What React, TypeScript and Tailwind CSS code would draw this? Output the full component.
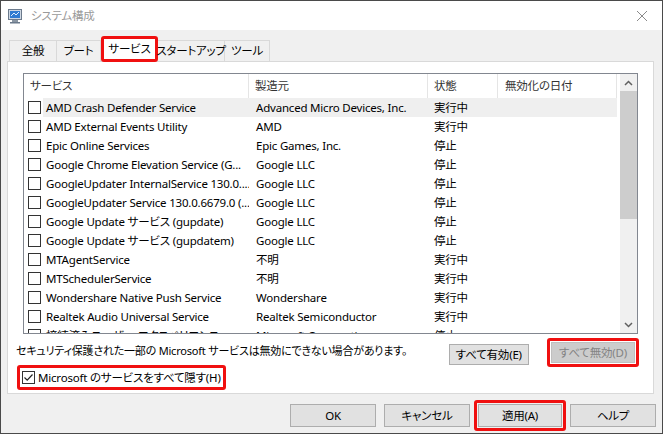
import React from "react";

const rows: [string, string, string][] = [
  ["AMD Crash Defender Service", "Advanced Micro Devices, Inc.", "実行中"],
  ["AMD External Events Utility", "AMD", "実行中"],
  ["Epic Online Services", "Epic Games, Inc.", "停止"],
  ["Google Chrome Elevation Service (G...", "Google LLC", "停止"],
  ["GoogleUpdater InternalService 130.0....", "Google LLC", "停止"],
  ["GoogleUpdater Service 130.0.6679.0 (...", "Google LLC", "停止"],
  ["Google Update サービス (gupdate)", "Google LLC", "停止"],
  ["Google Update サービス (gupdatem)", "Google LLC", "停止"],
  ["MTAgentService", "不明", "実行中"],
  ["MTSchedulerService", "不明", "実行中"],
  ["Wondershare Native Push Service", "Wondershare", "実行中"],
  ["Realtek Audio Universal Service", "Realtek Semiconductor", "実行中"],
  ["接続済みユーザー エクスペリエンス", "Microsoft Corporation", "停止"],
];

function Box({ checked = false }: { checked?: boolean }) {
  return (
    <div className="w-[13px] h-[13px] border border-[#333333] bg-white flex items-center justify-center shrink-0">
      {checked && (
        <svg width="11" height="11" viewBox="0 0 11 11">
          <path d="M1.5 5.5 L4.2 8.2 L9.5 2.5" fill="none" stroke="#222" strokeWidth="1.2" />
        </svg>
      )}
    </div>
  );
}

export default function App() {
  return (
    <div className="w-[663px] h-[434px] border border-[#4a4a4a] bg-[#f0f0f0] flex flex-col overflow-hidden text-[11.5px] tracking-[-0.2px] text-black font-['Noto_Sans','Noto_Sans_CJK_JP',sans-serif] [font-feature-settings:'palt']">
      {/* Title bar */}
      <div className="h-[29px] bg-white flex items-center pl-[6px] pr-[14px] shrink-0">
        <svg width="16" height="16" viewBox="0 0 16 16" className="shrink-0">
          <rect x="1.5" y="1.5" width="13" height="10" fill="#cfd8e3" stroke="#6b7a8c" />
          <rect x="3" y="3" width="10" height="7" fill="#2f7bd1" />
          <path d="M4 8 L7 5 L9 7 L12 4" stroke="#dfefff" strokeWidth="1" fill="none" />
          <rect x="5" y="12" width="6" height="2" fill="#8a96a3" />
          <rect x="3" y="14" width="10" height="1.5" fill="#6b7a8c" />
        </svg>
        <span className="ml-[8px] text-[11.5px] text-[#9a9a9a] leading-none">システム構成</span>
        <div className="flex-1" />
        <svg width="12" height="12" viewBox="0 0 12 12">
          <path d="M1 1 L11 11 M11 1 L1 11" stroke="#8a8a8a" strokeWidth="1" />
        </svg>
      </div>

      {/* Tabs */}
      <div className="flex items-end h-[25px] mt-[6px] ml-[8px] shrink-0 relative z-10 whitespace-nowrap">
        <div className="h-[21px] w-[48px] border border-b-0 border-[#d9d9d9] flex items-center justify-center">全般</div>
        <div className="h-[21px] w-[44px] border border-b-0 border-l-0 border-[#d9d9d9] flex items-center justify-center">ブート</div>
        <div className="h-[26px] w-[57px] -mb-px border-[3px] border-[#f01010] rounded-[3px] bg-white flex items-center justify-center">サービス</div>
        <div className="h-[21px] w-[67px] border border-b-0 border-l-0 border-[#d9d9d9] flex items-center justify-center">スタートアップ</div>
        <div className="h-[21px] w-[45px] border border-b-0 border-l-0 border-[#d9d9d9] flex items-center justify-center">ツール</div>
      </div>

      {/* Panel */}
      <div className="ml-[6px] mr-[8px] h-[333px] border border-[#d9d9d9] bg-white flex flex-col shrink-0 pt-[11px]">
        {/* List */}
        <div className="mx-[15px] h-[261px] border border-[#828790] flex overflow-hidden">
          <div className="flex-1 flex flex-col overflow-hidden">
            <div className="h-[24px] flex shrink-0 text-[#333]">
              <div className="w-[225px] pl-[6px] flex items-center border-r border-[#e5e5e5]">サービス</div>
              <div className="w-[179px] pl-[6px] flex items-center border-r border-[#e5e5e5]">製造元</div>
              <div className="w-[70px] pl-[6px] flex items-center border-r border-[#e5e5e5]">状態</div>
              <div className="w-[119px] pl-[7px] flex items-center border-r border-[#e5e5e5]">無効化の日付</div>
            </div>
            {rows.map((r, i) => (
              <div key={i} className="h-[19px] flex items-center shrink-0">
                <div className="w-[19px] pl-[4px] flex items-center shrink-0">
                  <Box />
                </div>
                <div className={`flex items-center h-[19px] w-[574px] shrink-0 ${i === 0 ? "bg-[#efefef]" : ""}`}>
                  <div className="w-[206px] pl-[3px] whitespace-nowrap overflow-hidden shrink-0">{r[0]}</div>
                  <div className="w-[179px] pl-[7px] whitespace-nowrap overflow-hidden shrink-0">{r[1]}</div>
                  <div className="w-[189px] pl-[6px] whitespace-nowrap shrink-0">{r[2]}</div>
                </div>
              </div>
            ))}
          </div>
          {/* Scrollbar */}
          <div className="w-[17px] bg-[#f0f0f0] flex flex-col shrink-0">
            <div className="h-[17px] flex items-center justify-center">
              <svg width="9" height="6" viewBox="0 0 9 6">
                <path d="M1 5 L4.5 1.5 L8 5" fill="none" stroke="#606060" strokeWidth="1.5" />
              </svg>
            </div>
            <div className="h-[128px] bg-[#cdcdcd]" />
            <div className="flex-1" />
            <div className="h-[17px] flex items-center justify-center">
              <svg width="9" height="6" viewBox="0 0 9 6">
                <path d="M1 1 L4.5 4.5 L8 1" fill="none" stroke="#606060" strokeWidth="1.5" />
              </svg>
            </div>
          </div>
        </div>

        {/* Bottom of panel */}
        <div className="flex justify-between mt-[6px] pl-[8px] pr-[14px] whitespace-nowrap">
          <div className="flex flex-col">
            <div className="h-[18px] flex items-center mt-[2px] text-[11px]">
              セキュリティ保護された一部の Microsoft サービスは無効にできない場合があります。
            </div>
            <div className="mt-[5px] h-[25px] self-start border-[3px] border-[#f01010] rounded-[3px] flex items-center pl-[2px] pr-[2px] ml-[1px]">
              <Box checked />
              <span className="ml-[3px]">Microsoft のサービスをすべて隠す(H)</span>
            </div>
          </div>
          <div className="flex items-start shrink-0">
            <div className="mt-[4px] h-[21px] px-[6px] bg-[#e1e1e1] border border-[#adadad] flex items-center">すべて有効(E)</div>
            <div className="ml-[18px] -mt-[2px] border-[3px] border-[#f01010] rounded-[3px] p-[1px]">
              <div className="h-[21px] px-[7px] bg-[#cccccc] border border-[#bfbfbf] text-[#838383] flex items-center">すべて無効(D)</div>
            </div>
          </div>
        </div>
      </div>

      {/* Bottom buttons */}
      <div className="flex justify-end items-center mt-[6px] pr-[6px] whitespace-nowrap">
        <div className="h-[23px] w-[86px] bg-[#e1e1e1] border border-[#adadad] flex items-center justify-center">OK</div>
        <div className="ml-[8px] h-[23px] w-[86px] bg-[#e1e1e1] border border-[#adadad] flex items-center justify-center">キャンセル</div>
        <div className="ml-[4px] border-[3px] border-[#f01010] rounded-[3px] p-[1px]">
          <div className="h-[23px] w-[84px] bg-[#e1e1e1] border border-[#adadad] flex items-center justify-center">適用(A)</div>
        </div>
        <div className="ml-[4px] h-[23px] w-[86px] bg-[#e1e1e1] border border-[#adadad] flex items-center justify-center">ヘルプ</div>
      </div>
    </div>
  );
}
